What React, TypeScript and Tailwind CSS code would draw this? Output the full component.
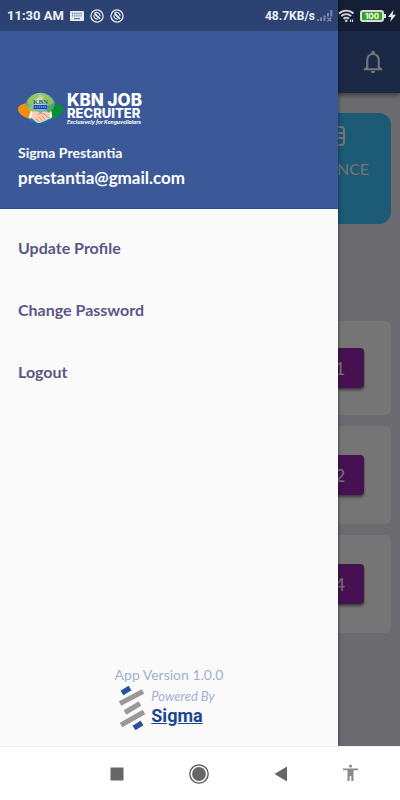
import React from 'react';

const menuItems = ['Update Profile', 'Change Password', 'Logout'];

const jobCards = [
  { count: 1, size: 'h-[94px]' },
  { count: 2, size: 'h-[98px]' },
  { count: 4, size: 'h-[98px]' },
];

function BlockedIcon() {
  return (
    <svg width="14" height="14" viewBox="0 0 14 14" fill="none" stroke="#e6eaf2">
      <circle cx="7" cy="7" r="6.100" strokeWidth="1.300" />
      <path d="M4.500 4.200c2-1.800 5.600-.5 5.700 3.100M3.900 6.300c0 2.200 1.500 3.800 3.900 3.800" strokeWidth="1.200" />
      <path d="m4.500 4.500 5.500 5.300" strokeWidth="1.800" />
    </svg>
  );
}

function StatusBar() {
  return (
    <div className="absolute inset-x-0 top-0 z-20 flex h-[31px] items-center justify-between bg-black/25 pl-[7px] pr-1 text-[#eef1f7]">
      <div className="flex items-center gap-[6px]">
        <span className="font-[Roboto] text-[13px] font-bold leading-4">11:30 AM</span>
        <svg width="14" height="10" viewBox="0 0 14 10">
          <rect width="14" height="10" rx="1" fill="#e6eaf2" />
          <path d="M2 2.500h10M2 4.800h10" stroke="#7585a6" strokeWidth="1.300" strokeDasharray="1.400 .7" />
          <path d="M4 7.600h6" stroke="#5f7097" strokeWidth="1.200" />
        </svg>
        <BlockedIcon />
        <BlockedIcon />
      </div>
      <div className="flex items-center">
        <span className="font-[Roboto] text-[12px] font-bold leading-4">48.7KB/s</span>
        <svg className="ml-[2px]" width="16" height="12" viewBox="0 0 16 12" fill="#7688ad">
          <path d="M0 9h2v2H0zM3 7.500h2V11H3zM6.500 5.500h2V11h-2zM10 3h2v3.500h-2zM13.300 0h2v6.500h-2z" />
          <path d="m10.300 7.500 4 4m0-4-4 4" stroke="#7688ad" strokeWidth="1.300" />
        </svg>
        <svg className="ml-[5px]" width="18" height="14" viewBox="0 0 18 14" fill="none" stroke="#d3d6dc" strokeWidth="1.900">
          <path d="M1 4.500a10.500 10.500 0 0 1 14.500 0M3.300 7.200a7 7 0 0 1 9.900 0M5.600 9.700a3.800 3.800 0 0 1 5.300 0" />
          <circle cx="8.200" cy="11.700" r="1.300" fill="#d3d6dc" stroke="none" />
          <path d="M12.500 10.500v2.500M14.500 10.500v2.500" strokeWidth="1.200" />
        </svg>
        <div className="ml-1 flex items-center">
          <div className="flex h-3 w-6 items-center rounded-[3px] border-2 border-[#d9dce1] bg-[#35a51b]">
            <span className="w-full text-center font-[Inter] text-[8px] font-bold leading-[8px] text-white">100</span>
          </div>
          <span className="h-1 w-[2px] bg-[#d9dce1]" />
        </div>
        <svg className="ml-[2px]" width="8" height="12" viewBox="0 0 8 12" fill="#e8eaed">
          <path d="M5.500 0 0 7h3.300L2 12l6-7.200H4.500z" />
        </svg>
      </div>
    </div>
  );
}

function Dashboard() {
  return (
    <main className="flex flex-1 flex-col bg-[#ebe9f3] font-[Lato,sans-serif]">
      <header className="flex h-[93px] items-end justify-end bg-[#3b5998] pb-[18px] pr-[15px] shadow-[0_2px_5px_rgba(0,0,0,0.5)]">
        <button aria-label="Notifications">
          <svg width="24" height="26" viewBox="0 0 24 26" fill="#fff">
            <path d="M10.200 4.300V3.600a1.800 1.800 0 0 1 3.600 0v.7c3.300.8 5 3.500 5 7v6.500l2.500 2.200v1.200H2.700V20l2.500-2.200v-6.500c0-3.500 1.700-6.200 5-7zM12 5.900c-3 0-4.700 2.200-4.700 5.400v7.900h9.400v-7.900c0-3.200-1.700-5.400-4.700-5.400z" fillRule="evenodd" />
            <path d="M9.800 22h4.400a2.200 2.200 0 0 1-4.400 0z" />
          </svg>
        </button>
      </header>

      {/* Summary tile */}
      <section className="flex justify-end px-[9px] pt-5">
        <div className="flex h-[111px] w-[116px] flex-col items-center rounded-[12px] bg-[#40c4ff] pt-3 text-white">
          <svg width="24" height="22" viewBox="0 0 24 22" fill="none" stroke="currentColor" strokeWidth="2">
            <rect x="1" y="2" width="22" height="18" rx="3" />
            <path d="M1 8h22M16 8v12M16 13h7" />
          </svg>
          <p className="mt-3 text-[16px] leading-5">BALANCE</p>
          <p className="mt-3 text-[18px] leading-6">2</p>
        </div>
      </section>

      {/* Job list */}
      <section className="mt-[97px] flex flex-col gap-[11px] px-[9px]">
        {jobCards.map((card) => (
          <div key={card.count} className={`flex items-center justify-end rounded-[6px] bg-white pr-[27px] ${card.size}`}>
            <button className="h-10 w-12 rounded-[4px] bg-[#9c27b0] text-[18px] text-white shadow-[0_2px_3px_rgba(0,0,0,0.5)]">
              {card.count}
            </button>
          </div>
        ))}
      </section>
    </main>
  );
}

function BrandLogo() {
  return (
    <div className="flex items-center gap-1 text-white">
      <svg width="45" height="36" viewBox="0 0 46 36">
        <defs>
          <radialGradient id="globe" cx="45%" cy="25%" r="75%">
            <stop offset="0" stopColor="#d8eeb8" />
            <stop offset="0.5" stopColor="#62aa9c" />
            <stop offset="1" stopColor="#0b63ae" />
          </radialGradient>
        </defs>
        <ellipse cx="23" cy="18" rx="16" ry="16.500" fill="url(#globe)" />
        <path d="M10 9c3-5 8-7 12-6l-2 4-4 1-1 4-5 1zM26 3c5 1 9 4 11 8l-4 3-2-4-5-1zM9 15l7 1 2 5-6 1z" fill="#9bc64b" opacity=".85" />
        <path d="M31 14l6 2-2 6-5-2z" fill="#4fa85a" />
        <path d="M8 12c-5 1-8 3-8 6 0 5 7 9 12 10l3-7c-4-1-6-4-7-9z" fill="#f78d0c" />
        <path d="M38 12c5 1 8 3 8 6 0 5-6 9-11 10l-4-7c4-1 6-4 7-9z" fill="#0a8f35" />
        <rect x="16" y="14" width="14" height="4" fill="#1739d4" />
        <path d="M17 16h12" stroke="#b9c9ff" strokeWidth="1" strokeDasharray="1.500 .6" />
        <text x="23" y="13" textAnchor="middle" fontFamily="Liberation Serif, serif" fontSize="7" fill="#1d6160">KBN</text>
        <path d="M13 21c3-1 6-1 8 0l2 1c3-2 7-2 9 0l2 5-6 3-5 2c-3 1-5-1-7-3l-4-3z" fill="#f8cdb8" />
        <path d="m20 24 3-2c4 0 6 4 9 5M18 28l4 3M21 26l4 4M24 25l4 4" fill="none" stroke="#c37f69" strokeWidth=".8" />
        <path d="m13 20 2 1-2 7-2-1zM32 21l2-1 1 6-2 2z" fill="#fff" />
      </svg>
      <div className="font-[Inter] font-extrabold">
        <p className="text-[17px] leading-4">KBN JOB</p>
        <p className="text-[13px] leading-[11px]">RECRUITER</p>
        <p className="text-[5px] font-bold italic leading-[7px]">Exclusively for Konguvellalars</p>
      </div>
    </div>
  );
}

function SigmaMark() {
  return (
    <svg width="27" height="46" viewBox="0 0 27 46" fill="none" strokeWidth="5">
      <path d="m3 8 8-5" stroke="#29529b" strokeWidth="5.500" />
      <path d="m1 18.500 23-12M6 27.500l15-9M2 40l23-13" stroke="#999" />
      <path d="m15 43 8-5" stroke="#29529b" strokeWidth="5.500" />
    </svg>
  );
}

function Drawer() {
  return (
    <aside className="absolute inset-y-0 left-0 z-10 flex w-[338px] flex-col bg-[#fafafa] font-[Lato,sans-serif] shadow-[0_0_4px_rgba(0,0,0,0.5)]">
      <div className="border-b border-[#1e4e94] bg-[#3b5998] px-[18px] pb-[18px] pt-[91px] font-bold text-white">
        <BrandLogo />
        <p className="mt-4 text-[14px] leading-5">Sigma Prestantia</p>
        <p className="mt-[3px] text-[17px] leading-6">prestantia@gmail.com</p>
      </div>

      <nav className="flex flex-col pt-2">
        {menuItems.map((item) => (
          <a key={item} href="#" className="flex h-[62px] items-center px-[18px] text-[16px] font-bold text-[#5b5685]">
            {item}
          </a>
        ))}
      </nav>

      <div className="mt-auto flex flex-col items-center pb-[15px]">
        <p className="text-[14px] leading-5 text-[#a3b0d0]">App Version 1.0.0</p>
        <div className="flex items-center gap-[5px] pr-1">
          <SigmaMark />
          <div className="pb-1">
            <p className="text-[13px] italic leading-5 text-[#a3b0d0]">Powered By</p>
            <a href="#" className="block font-[Roboto] text-[18px] font-bold leading-5 text-[#1d4590] underline">
              Sigma
            </a>
          </div>
        </div>
      </div>
    </aside>
  );
}

function SystemNav() {
  return (
    <nav className="flex h-[54px] items-center justify-end gap-[49px] border-t border-[#eee] bg-white pr-10">
      <div className="flex items-center gap-[62px]">
        <button aria-label="Recent apps">
          <svg width="20" height="20" viewBox="0 0 20 20">
            <path d="M3.500 3.500h13v13h-13z" fill="#666" />
          </svg>
        </button>
        <button aria-label="Home">
          <svg width="20" height="20" viewBox="0 0 20 20">
            <circle cx="10" cy="10" r="9.200" fill="none" stroke="#555" strokeWidth="1.300" />
            <circle cx="10" cy="10" r="6.900" fill="#666" />
          </svg>
        </button>
        <button aria-label="Back">
          <svg width="20" height="20" viewBox="0 0 20 20">
            <path d="M16 2.500v15L3.500 10z" fill="#666" />
          </svg>
        </button>
      </div>
      <button aria-label="Accessibility">
        <svg width="20" height="20" viewBox="0 0 20 20" fill="#8a8a8a">
          <circle cx="10.500" cy="2" r="1.600" />
          <path d="M3 4.500h15v1.800h-4.500V17h-2.200v-5H9.700v5H7.500V6.300H3z" />
        </svg>
      </button>
    </nav>
  );
}

export default function App() {
  return (
    <div className="flex min-h-screen flex-col">
      <div className="relative flex flex-1 flex-col overflow-hidden">
        <Dashboard />
        <div className="absolute inset-0 bg-black/54" />
        <Drawer />
        <StatusBar />
      </div>
      <SystemNav />
    </div>
  );
}
